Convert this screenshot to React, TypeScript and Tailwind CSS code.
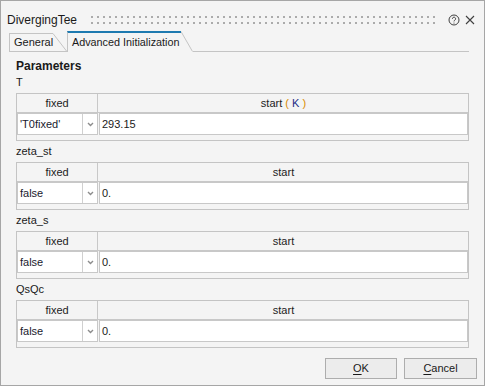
import React from 'react';

const SECTIONS = [
  { name: 'T', fixed: "'T0fixed'", start: '293.15', unit: 'K' },
  { name: 'zeta_st', fixed: 'false', start: '0.', unit: '' },
  { name: 'zeta_s', fixed: 'false', start: '0.', unit: '' },
  { name: 'QsQc', fixed: 'false', start: '0.', unit: '' },
];

function ParamGrid({ fixed, start, unit }: { fixed: string; start: string; unit: string }) {
  return (
    <div className="flex h-[48px] w-[453px] flex-col border border-[#c4c4c4] bg-[#f4f4f4]">
      <div className="flex h-[19px] border-b border-[#c8c8c8] leading-[18px] text-[#222]">
        <div className="w-[81px] border-r border-[#c8c8c8] text-center">fixed</div>
        <div className="flex-1 pl-[1px] text-center">
          start
          {unit && (
            <>
              {' '}
              <span className="text-[#d98a00]">(</span> <span className="text-[#1c2c86]">{unit}</span>{' '}
              <span className="text-[#d98a00]">)</span>
            </>
          )}
        </div>
      </div>
      <div className="flex h-[22px] gap-[1px]">
        <div className="flex w-[81px] border border-[#c8c8c8] bg-white">
          <div className="flex-1 pl-[2px] leading-[20px] text-[#1a1a2e]">{fixed}</div>
          <div className="flex w-[15px] items-center justify-center border-l border-[#d0d0d0]">
            <svg width="7" height="5" viewBox="0 0 7 5">
              <path d="M1 1 L3.5 3.5 L6 1" fill="none" stroke="#8c8c8c" strokeWidth="1.4" />
            </svg>
          </div>
        </div>
        <div className="flex-1 border border-[#c8c8c8] bg-white pl-[2px] leading-[20px] text-[#1a1a1a]">{start}</div>
      </div>
    </div>
  );
}

export default function App() {
  return (
    <div className="flex h-[386px] w-[485px] flex-col border border-[#a6a6a6] bg-[#f4f4f4] font-['Liberation_Sans',Arial,sans-serif] text-[11px] text-[#1a1a1a]">
      {/* title bar */}
      <div className="flex h-[30px] items-center pt-[7px] pl-[6px] pr-[9px]">
        <span className="text-[12px] leading-[16px] text-[#1a1a1a]">DivergingTee</span>
        <svg className="ml-[14px] mr-[10px] h-[8px] flex-1">
          <defs>
            <pattern id="dots" width="6" height="6" patternUnits="userSpaceOnUse">
              <rect x="0" y="0" width="2" height="2" fill="#ababab" />
            </pattern>
          </defs>
          <rect width="100%" height="8" fill="url(#dots)" />
        </svg>
        <svg width="12" height="12" viewBox="0 0 12 12" className="mr-[5px]">
          <circle cx="6" cy="6" r="5" fill="none" stroke="#404040" strokeWidth="1" />
          <path d="M4.4 4.8 A1.6 1.6 0 1 1 6.9 6.1 C6.3 6.5 6 6.8 6 7.4" fill="none" stroke="#404040" strokeWidth="1" />
          <circle cx="6" cy="9" r="0.6" fill="#404040" />
        </svg>
        <svg width="10" height="10" viewBox="0 0 10 10">
          <path d="M1 1 L9 9 M9 1 L1 9" stroke="#404040" strokeWidth="1.1" />
        </svg>
      </div>

      {/* tabs */}
      <div className="flex h-[21px] items-end pl-[8px] pr-[15px]">
        <div className="flex h-[19px] border-b border-[#c4c4c4]">
          <div className="h-full w-[44px] border-l border-t border-[#c4c4c4] pl-[4px] pt-[1px] leading-[14px]">General</div>
          <svg width="14" height="18" viewBox="0 0 14 18">
            <path d="M0 0.5 L13.5 18" stroke="#c4c4c4" strokeWidth="1" fill="none" />
          </svg>
        </div>
        <div className="flex h-[21px]">
          <div className="h-full w-[114px] whitespace-nowrap border-l border-t-2 border-l-[#c4c4c4] border-t-[#1e7ab0] pl-[4px] pt-[2px] text-[10.8px] leading-[14px]">
            Advanced Initialization
          </div>
          <svg width="12" height="21" viewBox="0 0 12 21">
            <path d="M0 0.5 L11.5 20.5" stroke="#c4c4c4" strokeWidth="1" fill="none" />
          </svg>
        </div>
        <div className="h-[1px] flex-1 bg-[#c4c4c4]" />
      </div>

      {/* content */}
      <div className="flex flex-col pl-[15px]">
        <div className="mt-[6px] h-[14px] text-[12px] font-bold leading-[16px]">Parameters</div>
        {SECTIONS.map((s) => (
          <div key={s.name} className="flex flex-col">
            <div className="h-[21px] pt-[3px] leading-[14px]">{s.name}</div>
            <ParamGrid fixed={s.fixed} start={s.start} unit={s.unit} />
          </div>
        ))}
      </div>

      {/* buttons */}
      <div className="mt-[10px] flex justify-end gap-[7px] pr-[7px]">
        <button className="h-[21px] w-[72px] border border-[#adadad] bg-[#ececec] text-[11px] text-[#1a1a1a]">
          <span className="underline underline-offset-2">O</span>K
        </button>
        <button className="h-[21px] w-[73px] border border-[#adadad] bg-[#ececec] text-[11px] text-[#1a1a1a]">
          <span className="underline underline-offset-2">C</span>ancel
        </button>
      </div>
    </div>
  );
}
